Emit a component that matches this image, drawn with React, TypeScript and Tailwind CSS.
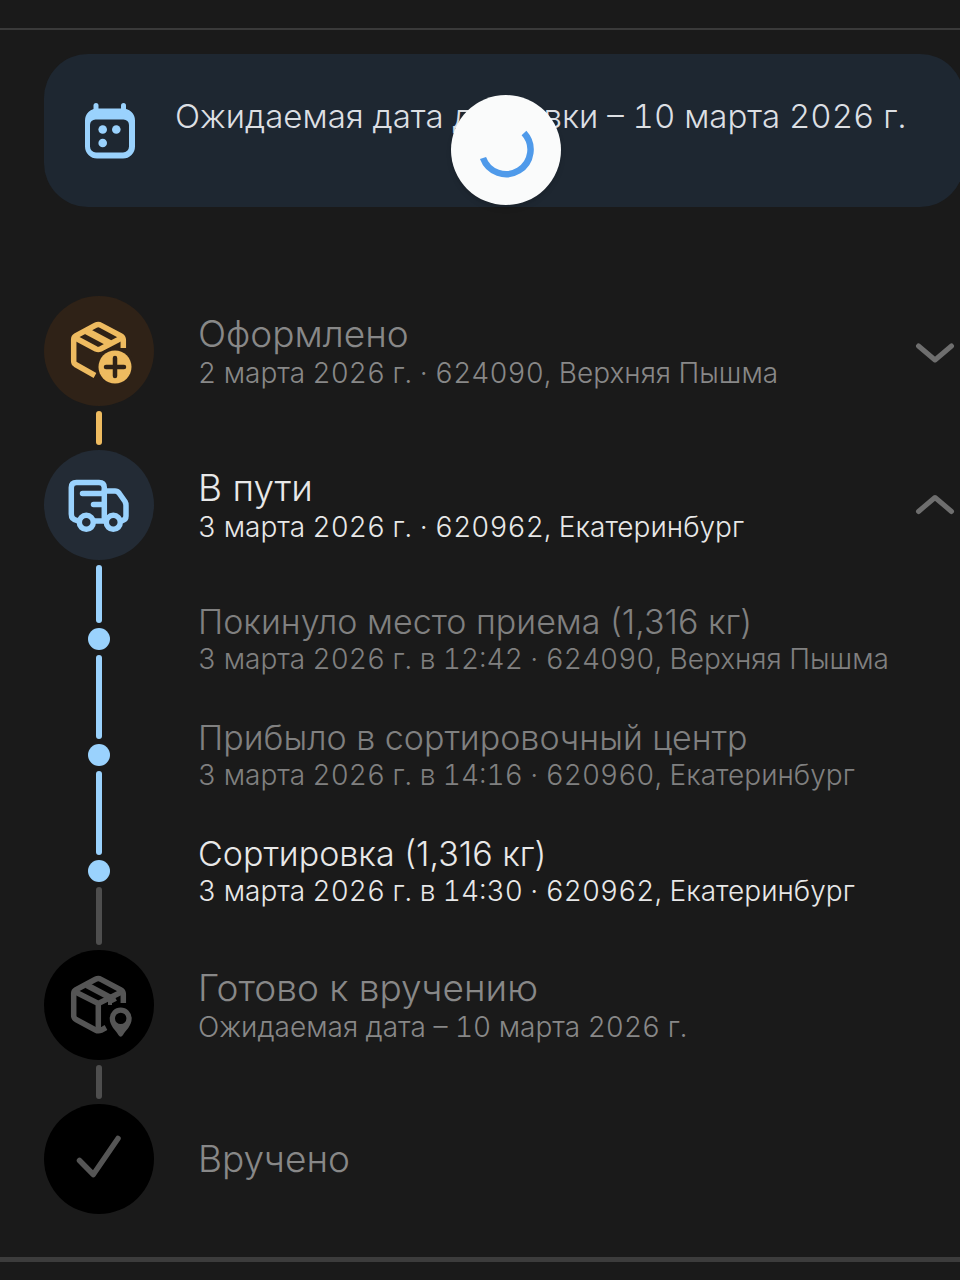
import type { ReactNode } from "react"
import clsx from "clsx"

function CalendarIcon() {
  return (
    <svg viewBox="0 0 50 56" className="w-[50px] h-14 shrink-0 text-[#9ad2fd]" fill="currentColor" aria-hidden="true">
      <rect x="8.5" y="0" width="5" height="10" rx="2.5" />
      <rect x="36" y="0" width="5" height="10" rx="2.5" />
      <path
        fillRule="evenodd"
        d="M12 5.5H38A12 12 0 0 1 50 17.5V43.5A12 12 0 0 1 38 55.5H12A12 12 0 0 1 0 43.5V17.5A12 12 0 0 1 12 5.5ZM10.5 16.5A5.5 5.5 0 0 0 5 22V43.5A6 6 0 0 0 11 49.5H38A6 6 0 0 0 44 43.5V22A5.5 5.5 0 0 0 38.5 16.5Z"
      />
      <circle cx="17.7" cy="26.5" r="4.3" />
      <circle cx="31.3" cy="26.5" r="4.3" />
      <circle cx="17.7" cy="40" r="4.3" />
    </svg>
  )
}

function BoxPlusIcon() {
  return (
    <svg viewBox="0 0 110 110" className="size-full" fill="none" stroke="currentColor" strokeWidth="5.5" strokeLinejoin="round" aria-hidden="true">
      <path d="M51 79.5L31.500 68.500Q29.700 67.400 29.700 65V43.500Q29.700 41 32 39.700L51.500 29.300Q54.300 27.800 57 29.300L76.500 39.700Q79.300 41.300 79.300 44V52" />
      <path d="M30.5 41.5L52 53Q54.300 54 56.500 53L78.500 41.500" />
      <path d="M42.5 35L66 47.5" strokeWidth="7" />
      <circle cx="71" cy="71" r="19.5" fill="#2f2217" stroke="none" />
      <circle cx="71" cy="71" r="16.5" fill="currentColor" stroke="none" />
      <path d="M71 62V80M62 71H80" stroke="#2f2217" strokeWidth="4.5" strokeLinecap="round" />
    </svg>
  )
}

function TruckIcon() {
  return (
    <svg viewBox="0 0 110 110" className="size-full" fill="none" stroke="currentColor" strokeWidth="5.5" strokeLinecap="round" strokeLinejoin="round" aria-hidden="true">
      <path d="M33 70.5Q27.300 69.500 27.300 64V37.500Q27.300 32.500 32.500 32.500H55Q60.300 32.500 60.300 37.500V70.500" />
      <path d="M60.3 41H71Q73.500 41 75 43L81 51.500Q82 53.200 82 55.500V66Q82 69.500 78.500 70.500" />
      <path d="M38.5 43.5H60M49.5 54.5H60M51 71H61" strokeWidth="5.5" />
      <circle cx="42.3" cy="72.3" r="7" />
      <circle cx="69.3" cy="72.3" r="7" />
    </svg>
  )
}

function BoxPinIcon() {
  return (
    <svg viewBox="0 0 110 110" className="size-full" fill="none" stroke="currentColor" strokeWidth="5.5" strokeLinejoin="round" aria-hidden="true">
      <path d="M62 77.5L57 80.300Q54.300 81.500 51.500 80L32 69.500Q29.700 68 29.700 65.500V43.500Q29.700 41 32 39.700L51.500 29.300Q54.300 27.800 57 29.300L76.500 39.700Q79.300 41.300 79.300 44V53" />
      <path d="M30.5 41.5L54.3 53.5L78.5 41.5M54.3 53V80" />
      <path d="M42.5 35L66 47.5" strokeWidth="6" />
      <path d="M66 47V55M66 52L72 49" strokeWidth="4" />
      <path
        d="M76.7 57.5A11 11 0 0 1 87.7 68.5C87.700 76 81.500 80.500 79 85Q76.700 88.500 74.400 85C72 80.500 65.700 76 65.700 68.500A11 11 0 0 1 76.700 57.500ZM76.700 62.700A5.700 5.700 0 1 0 76.700 74.100A5.700 5.700 0 1 0 76.700 62.700Z"
        fill="currentColor"
        fillRule="evenodd"
        stroke="none"
      />
    </svg>
  )
}

function CheckIcon() {
  return (
    <svg viewBox="0 0 110 110" className="size-full" fill="none" stroke="currentColor" strokeWidth="5.5" strokeLinecap="round" strokeLinejoin="round" aria-hidden="true">
      <path d="M35.5 56.5L49.3 70.5L74 34.5" />
    </svg>
  )
}

function Chevron({ up }: { up?: boolean }) {
  return (
    <svg viewBox="0 0 40 26" className="w-10 h-[26px]" fill="none" stroke="#6e6e6e" strokeWidth="5" strokeLinecap="round" strokeLinejoin="round" aria-hidden="true">
      <path d={up ? "M3.5 19.5L20 5.5L36.5 19.5" : "M3.5 8L20 22L36.5 8"} />
    </svg>
  )
}

type StepProps = {
  title: string
  details?: string
  icon: ReactNode
  circle: string
  line?: string
  active?: boolean
  toggle?: "open" | "closed"
}

function Step({ title, details, icon, circle, line, active, toggle }: StepProps) {
  return (
    <li className="flex items-start">
      <div className="flex flex-col items-center shrink-0">
        <div className={clsx("size-[110px] rounded-full", circle)}>{icon}</div>
        {line && <div className={clsx("w-1.5 my-[5px] rounded-full", line)} />}
      </div>
      <div
        className={clsx(
          "ml-11 flex-1 h-[110px] flex flex-col justify-center whitespace-nowrap",
          active ? "text-[#e8e8e8]" : "text-[#888888]",
          details && "pt-1"
        )}
      >
        <h2 className="text-[37px] leading-10">{title}</h2>
        {details && <p className="text-[28px] leading-[38px] tabular-nums">{details}</p>}
      </div>
      {toggle && (
        <button type="button" aria-label={title} aria-expanded={toggle === "open"} className="h-[110px] mr-[5px] flex items-center">
          <Chevron up={toggle === "open"} />
        </button>
      )}
    </li>
  )
}

const events = [
  {
    title: "Покинуло место приема (1,316 кг)",
    details: "3 марта 2026 г. в 12:42 · 624090, Верхняя Пышма",
    line: "h-[84px] bg-[#9ad2fd]",
    active: false,
  },
  {
    title: "Прибыло в сортировочный центр",
    details: "3 марта 2026 г. в 14:16 · 620960, Екатеринбург",
    line: "h-[84px] bg-[#9ad2fd]",
    active: false,
  },
  {
    title: "Сортировка (1,316 кг)",
    details: "3 марта 2026 г. в 14:30 · 620962, Екатеринбург",
    line: "h-[58px] bg-[#4e4e4e]",
    active: true,
  },
]

export default function App() {
  return (
    <main className="min-h-screen overflow-hidden bg-[#1a1a1a] pt-7 font-['Inter','Liberation_Sans',sans-serif] font-light">
      <div className="border-t-2 border-[#3a3a3a] pt-6 pl-11">
        {/* Expected date */}
        <section className="relative -mr-1 h-[153px] rounded-[44px] bg-[#1e2731] flex items-start pl-[41px]">
          <div className="pt-[49px]">
            <CalendarIcon />
          </div>
          <p className="ml-10 pt-[42px] text-[33px] leading-10 whitespace-nowrap tabular-nums text-[#dcdfe3]">
            Ожидаемая дата доставки – 10 марта 2026 г.
          </p>
          <div role="status" aria-label="Загрузка" className="absolute left-[407px] top-[41px] size-[110px] rounded-full bg-[#fafbfb] shadow-md">
            <svg viewBox="0 0 110 110" className="size-full" fill="none" stroke="#4f9aea" strokeWidth="6.5" aria-hidden="true">
              <path d="M73 38A24.5 24.5 0 1 1 32 63" />
            </svg>
          </div>
        </section>

        {/* Timeline */}
        <ol className="mt-[89px] pb-[43px]">
          <Step
            title="Оформлено"
            details="2 марта 2026 г. · 624090, Верхняя Пышма"
            icon={<BoxPlusIcon />}
            circle="bg-[#2f2217] text-[#eebb60]"
            line="h-[34px] bg-[#eebb60]"
            toggle="closed"
          />
          <Step
            title="В пути"
            details="3 марта 2026 г. · 620962, Екатеринбург"
            icon={<TruckIcon />}
            circle="bg-[#232b35] text-[#9ad2fd]"
            line="h-[58px] bg-[#9ad2fd]"
            active
            toggle="open"
          />
          {events.map((event) => (
            <li key={event.title} className="flex items-start">
              <div className="w-[110px] flex flex-col items-center shrink-0">
                <div className="size-[22px] rounded-full bg-[#9ad2fd]" />
                <div className={clsx("w-1.5 my-[5px] rounded-full", event.line)} />
              </div>
              <div className={clsx("ml-11 -mt-6 whitespace-nowrap", event.active ? "text-[#e8e8e8]" : "text-[#808080]")}>
                <h3 className="text-[34px] leading-9">{event.title}</h3>
                <p className="text-[28px] leading-[38px] tabular-nums">{event.details}</p>
              </div>
            </li>
          ))}
          <Step
            title="Готово к вручению"
            details="Ожидаемая дата – 10 марта 2026 г."
            icon={<BoxPinIcon />}
            circle="bg-black text-[#555555]"
            line="h-[34px] bg-[#4e4e4e]"
          />
          <Step title="Вручено" icon={<CheckIcon />} circle="bg-black text-[#555555]" />
        </ol>
      </div>
      <hr className="border-t-[5px] border-[#3c3c3c]" />
    </main>
  )
}
